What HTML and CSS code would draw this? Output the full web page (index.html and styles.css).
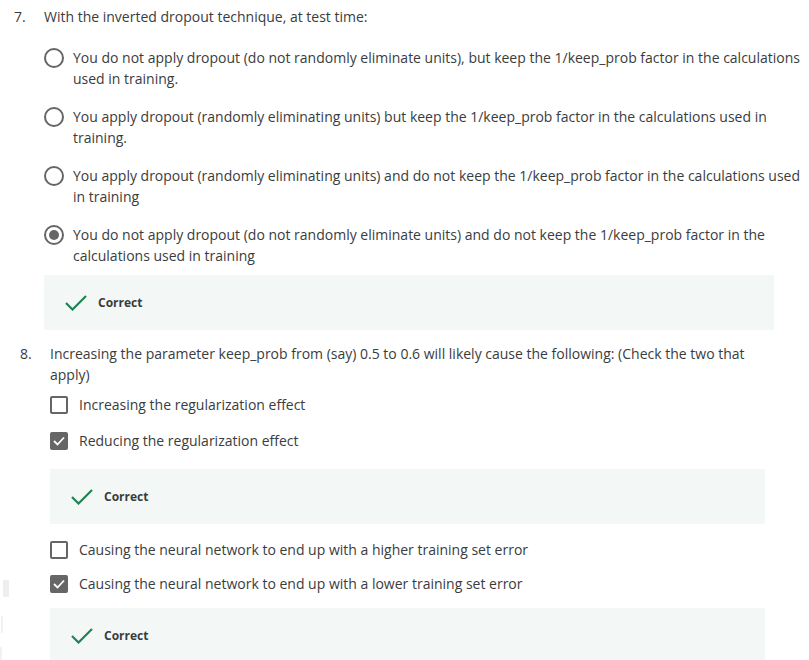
FILE: index.html
```html
<!DOCTYPE html>
<html lang="en">
<head>
<meta charset="utf-8">
<title>Quiz</title>
<link rel="stylesheet" href="styles.css">
</head>
<body>
<div class="edge-marks" aria-hidden="true">
  <span class="mark mark-a"></span>
  <span class="mark mark-b"></span>
  <span class="mark mark-c"></span>
</div>
<main class="quiz">
  <section class="question q7">
    <div class="q-head">
      <span class="q-num">7.</span>
      <p class="q-text">With the inverted dropout technique, at test time:</p>
    </div>
    <ul class="options options-radio">
      <li class="option">
        <span class="radio"></span>
        <span class="opt-text">You do not apply dropout (do not randomly eliminate units), but keep the 1/keep_prob factor in the calculations used in training.</span>
      </li>
      <li class="option">
        <span class="radio"></span>
        <span class="opt-text">You apply dropout (randomly eliminating units) but keep the 1/keep_prob factor in the calculations used in training.</span>
      </li>
      <li class="option">
        <span class="radio"></span>
        <span class="opt-text">You apply dropout (randomly eliminating units) and do not keep the 1/keep_prob factor in the calculations used in training</span>
      </li>
      <li class="option">
        <span class="radio checked"></span>
        <span class="opt-text">You do not apply dropout (do not randomly eliminate units) and do not keep the 1/keep_prob factor in the calculations used in training</span>
      </li>
    </ul>
    <div class="feedback fb-q7">
      <svg class="tick" width="22" height="16" viewBox="0 0 22 16"><polyline points="1,8 7.5,14.5 21,1" fill="none" stroke="#1f8354" stroke-width="2.2"/></svg>
      <span class="fb-label">Correct</span>
    </div>
  </section>

  <section class="question q8">
    <div class="q-head">
      <span class="q-num">8.</span>
      <p class="q-text">Increasing the parameter keep_prob from (say) 0.5 to 0.6 will likely cause the following: (Check the two that apply)</p>
    </div>
    <div class="check-row first">
      <span class="checkbox"></span>
      <span class="opt-text">Increasing the regularization effect</span>
    </div>
    <div class="check-row second">
      <span class="checkbox checked"><svg width="12" height="10" viewBox="0 0 12 10"><polyline points="1,5 4.5,8.5 11,1.5" fill="none" stroke="#fff" stroke-width="1.8"/></svg></span>
      <span class="opt-text">Reducing the regularization effect</span>
    </div>
    <div class="feedback fb-q8a">
      <svg class="tick" width="22" height="16" viewBox="0 0 22 16"><polyline points="1,8 7.5,14.5 21,1" fill="none" stroke="#1f8354" stroke-width="2.2"/></svg>
      <span class="fb-label">Correct</span>
    </div>
    <div class="check-row third">
      <span class="checkbox"></span>
      <span class="opt-text">Causing the neural network to end up with a higher training set error</span>
    </div>
    <div class="check-row fourth">
      <span class="checkbox checked"><svg width="12" height="10" viewBox="0 0 12 10"><polyline points="1,5 4.5,8.5 11,1.5" fill="none" stroke="#fff" stroke-width="1.8"/></svg></span>
      <span class="opt-text">Causing the neural network to end up with a lower training set error</span>
    </div>
    <div class="feedback fb-q8b">
      <svg class="tick" width="22" height="16" viewBox="0 0 22 16"><polyline points="1,8 7.5,14.5 21,1" fill="none" stroke="#1f8354" stroke-width="2.2"/></svg>
      <span class="fb-label">Correct</span>
    </div>
  </section>
</main>
</body>
</html>
```

FILE: styles.css
```css
html, body {
  margin: 0;
  padding: 0;
  background: #ffffff;
  overflow: hidden;
}

body {
  font-family: "Open Sans", "Liberation Sans", sans-serif;
  font-size: 14px;
  line-height: 21px;
  color: #3a3c3e;
  position: relative;
  height: 660px;
}

.quiz {
  padding-top: 6px;
}

.question {
  display: flex;
  flex-direction: column;
}

.q7 {
  padding-left: 14px;
}

.q8 {
  padding-left: 20px;
  margin-top: 13px;
}

.q-head {
  display: flex;
}

.q-num {
  width: 30px;
  flex: none;
}

.q-text {
  margin: 0;
}

.q8 .q-text {
  width: 700px;
}

.options {
  list-style: none;
  margin: 20px 0 0 30px;
  padding: 0;
  width: 765px;
  display: flex;
  flex-direction: column;
  gap: 17px;
}

.option {
  display: flex;
  align-items: flex-start;
}

.radio {
  flex: none;
  width: 20px;
  height: 20px;
  box-sizing: border-box;
  border: 2px solid #666666;
  border-radius: 50%;
  margin-top: 1px;
  margin-right: 9px;
  display: flex;
  align-items: center;
  justify-content: center;
}

.radio.checked::after {
  content: "";
  width: 10px;
  height: 10px;
  border-radius: 50%;
  background: #666666;
}

.feedback {
  background: #f3f8f7;
  height: 55px;
  display: flex;
  align-items: center;
  padding-left: 21px;
  box-sizing: border-box;
}

.fb-q7 {
  margin: 9px 0 0 30px;
  width: 730px;
}

.fb-q8a,
.fb-q8b {
  margin-left: 30px;
  width: 715px;
}

.fb-q8a {
  margin-top: 18px;
}

.fb-q8b {
  margin-top: 14px;
}

.tick {
  flex: none;
  margin-right: 11px;
  margin-top: 1px;
}

.fb-label {
  font-size: 12px;
  font-weight: 700;
  color: #3a3c3e;
}

.check-row {
  display: flex;
  align-items: center;
  margin-left: 30px;
}

.check-row.first {
  margin-top: 9px;
}

.check-row.second {
  margin-top: 15px;
}

.check-row.third {
  margin-top: 15px;
}

.check-row.fourth {
  margin-top: 13px;
}

.checkbox {
  flex: none;
  width: 18px;
  height: 18px;
  box-sizing: border-box;
  border: 2px solid #666666;
  border-radius: 2px;
  margin-right: 11px;
  display: flex;
  align-items: center;
  justify-content: center;
}

.checkbox.checked {
  background: #666666;
}

.edge-marks {
  position: absolute;
  left: 0;
  top: 0;
}

.mark {
  position: absolute;
  display: block;
  background: #eeeeee;
}

.mark-a {
  left: 3px;
  top: 580px;
  width: 6px;
  height: 17px;
}

.mark-b {
  left: 1px;
  top: 616px;
  width: 2px;
  height: 17px;
  background: #f2f2f2;
}

.mark-c {
  left: 0;
  top: 647px;
  width: 2px;
  height: 13px;
  background: #f2f2f2;
}
```
